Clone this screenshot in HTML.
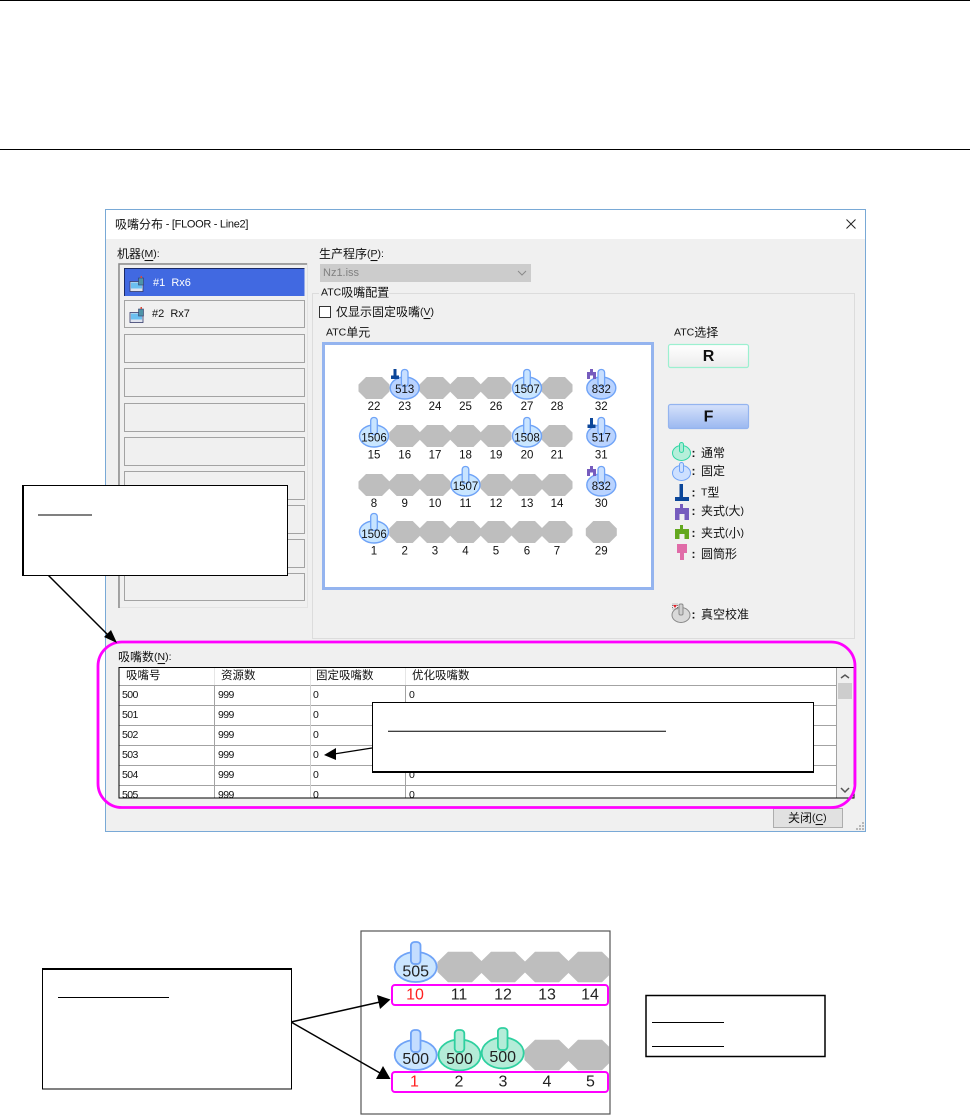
<!DOCTYPE html>
<html lang="zh">
<head>
<meta charset="utf-8">
<title>吸嘴分布</title>
<style>
html,body{margin:0;padding:0;background:#fff}
svg{display:block}
text{font-family:"Liberation Sans","WenQuanYi Zen Hei","Noto Sans CJK SC",sans-serif;font-size:12px;fill:#111;dominant-baseline:central}
.l{font-size:10.5px}
.t{font-size:11px;letter-spacing:-.3px}
.h{font-size:11.5px}
.d{font-weight:bold}
.n{font-size:11.5px;text-anchor:middle}
.c{font-size:10.5px;letter-spacing:-.6px}
.b{font-size:16px;text-anchor:middle;fill:#222}
.big{font-size:16px;text-anchor:middle;fill:#222}
.k{font-size:16px;font-weight:bold;text-anchor:middle}
</style>
</head>
<body>
<svg width="970" height="1115" viewBox="0 0 970 1115" xmlns="http://www.w3.org/2000/svg">
<defs>
<polygon id="o" fill="#bebebe" points="-15.5,-3.500 -8,-11 8,-11 15.500,-3.500 15.500,3.500 8,11 -8,11 -15.500,3.500"/>
<g id="nz"><ellipse cx="0" cy="0" rx="14.500" ry="11" fill="#c9e6ff" stroke="#6fa3f7" stroke-width="1.400"/><rect x="-3.300" y="-18.500" width="6.600" height="17" rx="3" fill="#c8e4ff" stroke="#6fa3f7" stroke-width="1.300"/></g>
<g id="nd"><ellipse cx="0" cy="0" rx="14.500" ry="11" fill="#b9d3ff" stroke="#6fa3f7" stroke-width="1.400"/><rect x="-3.300" y="-18.500" width="6.600" height="17" rx="3" fill="#c8dfff" stroke="#6fa3f7" stroke-width="1.300"/></g>
<polygon id="O" fill="#bebebe" points="-22.500,-5 -12,-15.300 12,-15.300 22.500,-5 22.500,5 12,15.300 -12,15.300 -22.500,5"/>
<g id="Nb"><ellipse cx="0" cy="0" rx="21" ry="15" fill="#cbe6ff" stroke="#6fa3f7" stroke-width="1.800"/><rect x="-4.800" y="-25" width="9.600" height="22" rx="3.500" fill="#c4ddff" stroke="#6fa3f7" stroke-width="1.800"/></g>
<g id="Ng"><ellipse cx="0" cy="0" rx="21" ry="15.500" fill="#b4ecd8" stroke="#2fd0a0" stroke-width="1.800"/><rect x="-4.800" y="-25" width="9.600" height="22" rx="3.500" fill="#b4ecd8" stroke="#2fd0a0" stroke-width="1.800"/></g>
<path id="t" fill="#0c4699" d="M-1.500,0H1.500V6.500H4V10H-4V6.500H-1.500Z"/>
<path id="p" fill="#765cbe" d="M-1.500,0H1.500V3H4.500V10H1.500V6.500H-1.500V10H-4.500V3H-1.500Z"/>
<g id="pc"><rect x="0.500" y="3.500" width="13" height="10" fill="#dfe3ee" stroke="#343a6a" stroke-width=".8"/><rect x="1.500" y="4.500" width="11" height="6" fill="#6cc0f0"/><rect x="9" y="0" width="5" height="7" fill="#4f94a8" stroke="#343a6a" stroke-width=".6"/><rect x="11" y="-2" width="1.500" height="2" fill="#d84b3a"/></g>
</defs>

<rect width="970" height="1115" fill="#fff"/>
<line x1="0" y1="0.500" x2="970" y2="0.500" stroke="#000"/>
<line x1="0" y1="149.500" x2="970" y2="149.500" stroke="#000"/>

<!-- dialog -->
<rect x="105.500" y="209.500" width="760" height="622" fill="#f0f0f0" stroke="#79a9d6"/>
<rect x="106" y="210" width="759" height="29" fill="#fff"/>
<text x="115" y="224.500">吸嘴分布<tspan class="t"> - [FLOOR - Line2]</tspan></text>
<path d="M846.500,219.500l9,9M855.500,219.500l-9,9" stroke="#222" stroke-width="1" fill="none"/>

<text x="117" y="254">机器<tspan class="l">(<tspan text-decoration="underline">M</tspan>):</tspan></text>
<rect x="118.500" y="263.500" width="189" height="344" fill="#f0f0f0" stroke="#e3e3e3"/>
<path d="M119,608V264H307" fill="none" stroke="#8a8a8a" stroke-width="1.500"/>
<rect x="124" y="268" width="180.500" height="28" fill="#4169e1"/>
<path d="M124.500,296V268.500H304.500" fill="none" stroke="#1a2a66"/>
<g fill="#f0f0f0" stroke="#a3a3a3">
<rect x="124.500" y="300.500" width="180" height="27"/>
<rect x="124.500" y="334.500" width="180" height="28"/>
<rect x="124.500" y="368.500" width="180" height="28"/>
<rect x="124.500" y="403.500" width="180" height="28"/>
<rect x="124.500" y="437.500" width="180" height="28"/>
<rect x="124.500" y="471.500" width="180" height="28"/>
<rect x="124.500" y="505.500" width="180" height="28"/>
<rect x="124.500" y="539.500" width="180" height="28"/>
<rect x="124.500" y="573.500" width="180" height="27"/>
</g>
<use href="#pc" x="129.500" y="278"/>
<use href="#pc" x="129.500" y="309"/>
<text x="153" y="283" style="fill:#fff;font-size:11px">#1&#160;&#160;Rx6</text>
<text x="152" y="314" style="font-size:11px">#2&#160;&#160;Rx7</text>

<text x="319" y="254">生产程序<tspan class="l">(<tspan text-decoration="underline">P</tspan>):</tspan></text>
<rect x="320" y="264" width="211" height="18" fill="#cccccc"/>
<text x="323" y="273" style="fill:#808080;font-size:11px">Nz1.iss</text>
<path d="M518,271l4,4 4,-4" fill="none" stroke="#8a8a8a"/>

<rect x="312.500" y="293.500" width="542" height="345" fill="none" stroke="#dcdcdc"/>
<rect x="319" y="288" width="70" height="12" fill="#f0f0f0"/>
<text x="321" y="292.500"><tspan class="l">ATC</tspan>吸嘴配置</text>
<rect x="319.500" y="306.500" width="11" height="11" fill="#fff" stroke="#333"/>
<text x="336" y="312">仅显示固定吸嘴<tspan class="l">(<tspan text-decoration="underline">V</tspan>)</tspan></text>
<text x="326" y="332.500"><tspan class="l">ATC</tspan>单元</text>
<rect x="323.500" y="343.500" width="329" height="245" fill="#fff" stroke="#94b4ef" stroke-width="3"/>

<!-- row 1 -->
<use href="#o" x="374" y="388"/><use href="#o" x="435" y="388"/><use href="#o" x="465.500" y="388"/><use href="#o" x="496" y="388"/><use href="#o" x="557" y="388"/>
<use href="#nd" x="404.700" y="388"/><use href="#nz" x="527" y="388"/><use href="#nd" x="601.300" y="388"/>
<use href="#t" x="395" y="369"/><use href="#p" x="591.500" y="369"/>
<text class="n" x="404.700" y="390">513</text><text class="n" x="527" y="390">1507</text><text class="n" x="601.300" y="390">832</text>
<!-- row 2 -->
<use href="#o" x="404.700" y="436"/><use href="#o" x="435" y="436"/><use href="#o" x="465.500" y="436"/><use href="#o" x="496" y="436"/><use href="#o" x="557" y="436"/>
<use href="#nz" x="374" y="436"/><use href="#nz" x="527" y="436"/><use href="#nd" x="601.300" y="436"/>
<use href="#t" x="591.500" y="418"/>
<text class="n" x="374" y="438.500">1506</text><text class="n" x="527" y="438.500">1508</text><text class="n" x="601.300" y="438.500">517</text>
<!-- row 3 -->
<use href="#o" x="374" y="485"/><use href="#o" x="404.700" y="485"/><use href="#o" x="435" y="485"/><use href="#o" x="496" y="485"/><use href="#o" x="527" y="485"/><use href="#o" x="557" y="485"/>
<use href="#nz" x="465.500" y="485"/><use href="#nd" x="601.300" y="485"/>
<use href="#p" x="591.500" y="466"/>
<text class="n" x="465.500" y="487">1507</text><text class="n" x="601.300" y="487">832</text>
<!-- row 4 -->
<use href="#o" x="404.700" y="532"/><use href="#o" x="435" y="532"/><use href="#o" x="465.500" y="532"/><use href="#o" x="496" y="532"/><use href="#o" x="527" y="532"/><use href="#o" x="557" y="532"/><use href="#o" x="601.300" y="532"/>
<use href="#nz" x="374" y="532"/>
<text class="n" x="374" y="535">1506</text>

<text class="n" x="374" y="407">22</text><text class="n" x="404.700" y="407">23</text><text class="n" x="435" y="407">24</text><text class="n" x="465.500" y="407">25</text><text class="n" x="496" y="407">26</text><text class="n" x="527" y="407">27</text><text class="n" x="557" y="407">28</text><text class="n" x="601.300" y="407">32</text>
<text class="n" x="374" y="455.500">15</text><text class="n" x="404.700" y="455.500">16</text><text class="n" x="435" y="455.500">17</text><text class="n" x="465.500" y="455.500">18</text><text class="n" x="496" y="455.500">19</text><text class="n" x="527" y="455.500">20</text><text class="n" x="557" y="455.500">21</text><text class="n" x="601.300" y="455.500">31</text>
<text class="n" x="374" y="504">8</text><text class="n" x="404.700" y="504">9</text><text class="n" x="435" y="504">10</text><text class="n" x="465.500" y="504">11</text><text class="n" x="496" y="504">12</text><text class="n" x="527" y="504">13</text><text class="n" x="557" y="504">14</text><text class="n" x="601.300" y="504">30</text>
<text class="n" x="374" y="551.500">1</text><text class="n" x="404.700" y="551.500">2</text><text class="n" x="435" y="551.500">3</text><text class="n" x="465.500" y="551.500">4</text><text class="n" x="496" y="551.500">5</text><text class="n" x="527" y="551.500">6</text><text class="n" x="557" y="551.500">7</text><text class="n" x="601.300" y="551.500">29</text>

<!-- right column -->
<text x="674" y="332.500"><tspan class="l">ATC</tspan>选择</text>
<linearGradient id="gr" x1="0" y1="0" x2="0" y2="1"><stop offset="0" stop-color="#fff"/><stop offset="1" stop-color="#ececec"/></linearGradient>
<linearGradient id="gf" x1="0" y1="0" x2="0" y2="1"><stop offset="0" stop-color="#d6e2fb"/><stop offset="1" stop-color="#9bb8f0"/></linearGradient>
<rect x="668.500" y="344.500" width="80" height="23" rx="2" fill="url(#gr)" stroke="#9cf0d0" stroke-width="1.200"/>
<text class="k" x="708.500" y="356.500">R</text>
<rect x="668.500" y="404.500" width="80" height="24" rx="2" fill="url(#gf)" stroke="#94b4ef" stroke-width="1.200"/>
<text class="k" x="708.500" y="417">F</text>

<ellipse cx="681.500" cy="453" rx="9" ry="7.500" fill="#b5efda" stroke="#2fd6a4"/>
<rect x="679.500" y="442.500" width="4" height="10" rx="2" fill="#a8ecd4" stroke="#2fd6a4"/>
<ellipse cx="681.500" cy="473" rx="9" ry="7.500" fill="#cde0ff" stroke="#6fa3f7"/>
<rect x="679.500" y="462.500" width="4" height="10" rx="2" fill="#cde0ff" stroke="#6fa3f7"/>
<path fill="#0c4699" d="M679.500,484H683V497H689V501H675V497H679.500Z"/>
<path fill="#765cbe" d="M680,504H683V508H689V520H684.500V514H679.500V520H675V508H680Z"/>
<path fill="#63a81f" d="M680,525H683V529H689V539H684.500V534H679.500V539H675V529H680Z"/>
<path fill="#e06ca8" d="M677,544H687V553H684V560H680V553H677Z"/>
<ellipse cx="681" cy="615" rx="9" ry="7.500" fill="#d9d9d9" stroke="#8a8a8a"/>
<rect x="679" y="604" width="4" height="11" rx="1.500" fill="#cfcfcf" stroke="#8a8a8a"/>
<path d="M673,605h4l-2,3z" fill="#e0202a"/>
<rect x="672.500" y="604" width="5" height="5" fill="none" stroke="#333" stroke-width=".6" stroke-dasharray="1 1"/>

<text class="d" x="691.500" y="453">:</text><text x="701" y="453">通常</text>
<text class="d" x="691.500" y="471">:</text><text x="701" y="471">固定</text>
<text class="d" x="691.500" y="492.500">:</text><text x="701" y="492.500"><tspan class="l">T</tspan>型</text>
<text class="d" x="691.500" y="511">:</text><text x="701" y="511">夹式<tspan class="l">(</tspan>大<tspan class="l">)</tspan></text>
<text class="d" x="691.500" y="533">:</text><text x="701" y="533">夹式<tspan class="l">(</tspan>小<tspan class="l">)</tspan></text>
<text class="d" x="691.500" y="554">:</text><text x="701" y="554">圆筒形</text>
<text class="d" x="691.500" y="614.500">:</text><text x="701" y="614.500">真空校准</text>

<!-- table -->
<text x="118" y="657">吸嘴数<tspan class="l">(<tspan text-decoration="underline">N</tspan>):</tspan></text>
<rect x="119" y="667" width="735" height="131" fill="#fff"/>
<rect x="837" y="668" width="16" height="130" fill="#f0f0f0"/>
<rect x="838" y="683" width="14" height="16" fill="#cdcdcd"/>
<path d="M841,678l4,-3 4,3M841,788l4,4 4,-4" fill="none" stroke="#555" stroke-width="1.500"/>
<g stroke="#a3a3a3">
<path d="M119,685.500H836.500M119,705.500H836.500M119,725.500H836.500M119,745.500H836.500M119,765.500H836.500M119,785.500H836.500" fill="none"/>
<path d="M214.500,685V798M405.500,685V798" fill="none"/>
<path d="M836.500,668V798" fill="none"/>
</g>
<path d="M310.500,685V798" stroke="#cfcfcf" fill="none"/>
<path d="M214.500,668V685M310.500,668V685M405.500,668V685" stroke="#e6e6e6" fill="none"/>
<rect x="119" y="667.500" width="735" height="130.500" fill="none" stroke="#000"/>
<text class="h" x="126" y="676">吸嘴号</text><text class="h" x="221" y="676">资源数</text><text class="h" x="316" y="676">固定吸嘴数</text><text class="h" x="412" y="676">优化吸嘴数</text>
<g>
<text class="c" x="122" y="695">500</text><text class="c" x="218" y="695">999</text><text class="c" x="313" y="695">0</text><text class="c" x="409" y="695">0</text>
<text class="c" x="122" y="715">501</text><text class="c" x="218" y="715">999</text><text class="c" x="313" y="715">0</text><text class="c" x="409" y="715">0</text>
<text class="c" x="122" y="735">502</text><text class="c" x="218" y="735">999</text><text class="c" x="313" y="735">0</text><text class="c" x="409" y="735">0</text>
<text class="c" x="122" y="755">503</text><text class="c" x="218" y="755">999</text><text class="c" x="313" y="755">0</text><text class="c" x="409" y="755">0</text>
<text class="c" x="122" y="775">504</text><text class="c" x="218" y="775">999</text><text class="c" x="313" y="775">0</text><text class="c" x="409" y="775">0</text>
<text class="c" x="122" y="795">505</text><text class="c" x="218" y="795">999</text><text class="c" x="313" y="795">0</text><text class="c" x="409" y="795">0</text>
</g>
<rect x="119" y="798" width="717" height="4" fill="#f0f0f0"/>
<path d="M119,798H854" stroke="#000" fill="none"/>

<!-- close button -->
<rect x="773.500" y="808.500" width="69" height="19" fill="#e1e1e1" stroke="#adadad"/>
<text x="788" y="818">关闭<tspan class="l">(<tspan text-decoration="underline">C</tspan>)</tspan></text>
<g fill="#b8b8b8"><rect x="862" y="822" width="2" height="2"/><rect x="859" y="825" width="2" height="2"/><rect x="862" y="825" width="2" height="2"/><rect x="856" y="828" width="2" height="2"/><rect x="859" y="828" width="2" height="2"/><rect x="862" y="828" width="2" height="2"/></g>

<!-- magenta outline -->
<rect x="98" y="642" width="757" height="165.500" rx="24" fill="none" stroke="#ff00ff" stroke-width="2.800"/>

<!-- callout 1 -->
<line x1="48" y1="575" x2="108" y2="635" stroke="#000" stroke-width="1.500"/>
<path d="M117,643L104,637L111,630Z" fill="#000"/>
<rect x="23" y="485.500" width="264.500" height="90" fill="#fff" stroke="#000"/>
<line x1="23" y1="485" x2="23" y2="576" stroke="#000" stroke-width="2"/>
<line x1="38" y1="515" x2="92" y2="515" stroke="#000"/>

<!-- callout 2 -->
<line x1="372" y1="748" x2="334" y2="754" stroke="#000" stroke-width="1.200"/>
<path d="M324,755L336,748V760Z" fill="#000"/>
<rect x="372.500" y="702.500" width="441" height="69" fill="#fff" stroke="#000"/>
<line x1="372" y1="772" x2="814" y2="772" stroke="#000" stroke-width="2"/>
<line x1="388" y1="731.300" x2="666" y2="731.300" stroke="#000"/>

<!-- bottom image -->
<rect x="361" y="931" width="249" height="183" fill="#fff" stroke="#555" stroke-width="1.200"/>
<svg x="362" y="932" width="247" height="181" viewBox="362 932 247 181">
<use href="#O" x="460" y="967"/><use href="#O" x="503" y="967"/><use href="#O" x="547" y="967"/><use href="#O" x="590" y="967"/>
<use href="#O" x="547" y="1055"/><use href="#O" x="590" y="1055"/>
<use href="#Nb" x="415.700" y="967"/><use href="#Nb" x="415.700" y="1055"/><use href="#Ng" x="459.500" y="1055"/><use href="#Ng" x="502.700" y="1053"/>
</svg>
<text class="big" x="415.700" y="972">505</text><text class="big" x="415.700" y="1059.500">500</text><text class="big" x="459.500" y="1059.500">500</text><text class="big" x="502.700" y="1057.500">500</text>
<rect x="392" y="985" width="216" height="20" rx="3" fill="#fff" stroke="#ff00ff" stroke-width="2"/>
<rect x="392" y="1072" width="216" height="20" rx="3" fill="#fff" stroke="#ff00ff" stroke-width="2"/>
<text class="b" x="415" y="995" style="fill:#ff2020">10</text><text class="b" x="459" y="995">11</text><text class="b" x="503" y="995">12</text><text class="b" x="547" y="995">13</text><text class="b" x="590" y="995">14</text>
<text class="b" x="414.500" y="1082" style="fill:#ff2020">1</text><text class="b" x="459" y="1082">2</text><text class="b" x="503" y="1082">3</text><text class="b" x="547" y="1082">4</text><text class="b" x="590.500" y="1082">5</text>

<!-- callout 3 arrows -->
<line x1="291" y1="1022" x2="380" y2="1002" stroke="#000" stroke-width="1.500"/>
<path d="M390.500,999.500L377,995L380,1009Z" fill="#000"/>
<line x1="291" y1="1022" x2="380" y2="1073" stroke="#000" stroke-width="1.500"/>
<path d="M390.500,1079L376,1079L383,1066Z" fill="#000"/>
<rect x="42.500" y="969" width="249" height="120" fill="#fff" stroke="#000"/>
<line x1="42" y1="969" x2="292" y2="969" stroke="#000" stroke-width="2"/>
<line x1="58" y1="997.500" x2="169" y2="997.500" stroke="#000"/>

<!-- callout 4 -->
<rect x="646" y="995.500" width="179" height="61" fill="#fff" stroke="#000" stroke-width="1.500"/>
<line x1="652" y1="1022.500" x2="724" y2="1022.500" stroke="#000"/>
<line x1="652" y1="1046.500" x2="724" y2="1046.500" stroke="#000"/>
</svg>
</body>
</html>
